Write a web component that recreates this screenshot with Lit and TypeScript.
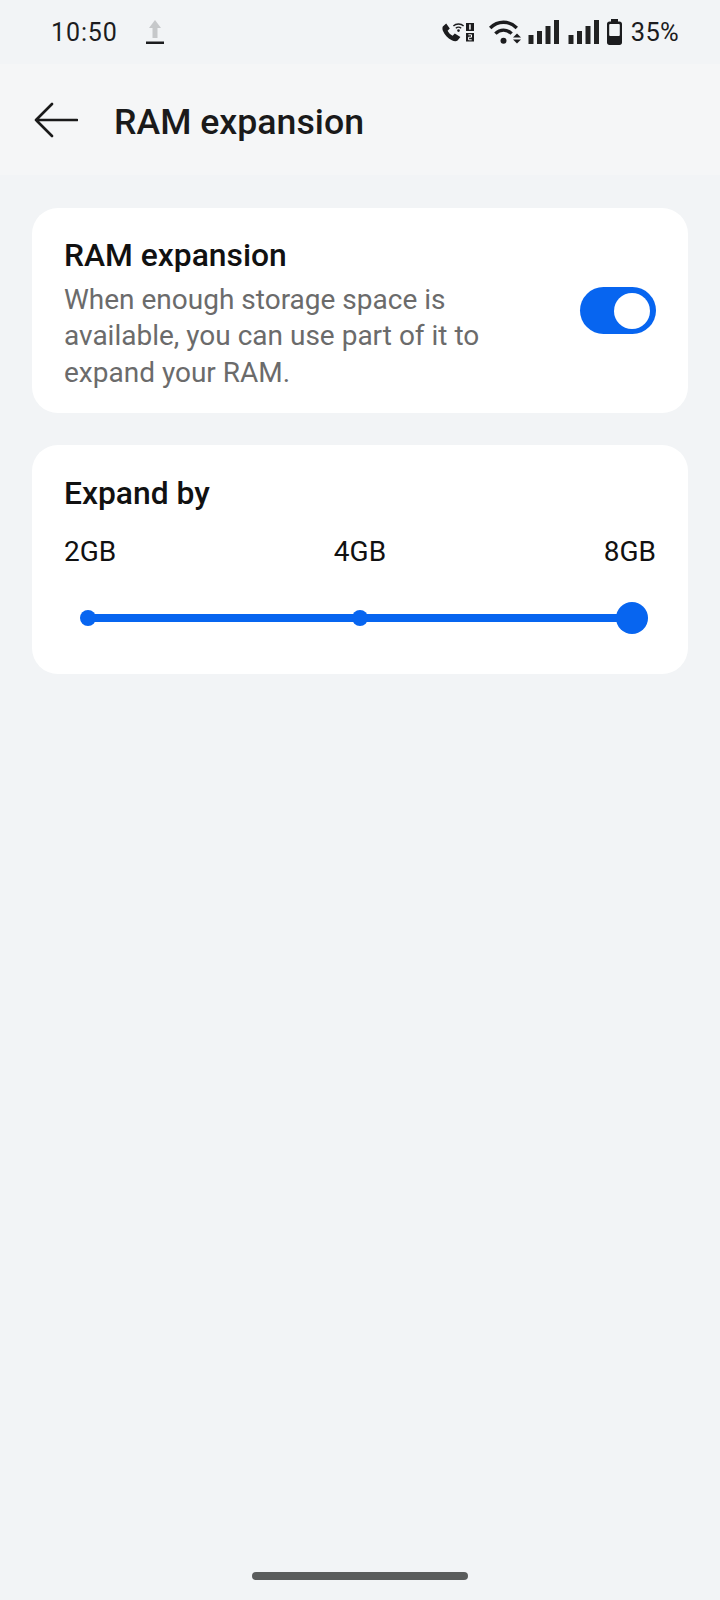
import { LitElement, html, css, svg } from "lit";
import { customElement, property } from "lit/decorators.js";

const signalBars = svg`
  <rect x="0.5" y="15" width="5" height="9" fill="#222"></rect>
  <rect x="9" y="11" width="5" height="13" fill="#222"></rect>
  <rect x="17.5" y="6" width="5" height="18" fill="#222"></rect>
  <rect x="26" y="0" width="5" height="24" fill="#222"></rect>
`;

@customElement("status-bar")
export class StatusBar extends LitElement {
  static styles = css`
    :host {
      display: flex;
      align-items: center;
      height: 64px;
      padding: 0 41px 0 51px;
      box-sizing: border-box;
      color: #1c1c1e;
      font-family: Roboto, sans-serif;
      font-size: 25px;
    }

    svg {
      display: block;
      flex: none;
    }

    .time {
      width: 95px;
      letter-spacing: 0.9px;
    }

    .spacer {
      flex: 1;
    }

    .call {
      margin-right: 15px;
    }

    .wifi {
      margin-right: 7px;
    }

    .signal {
      margin-right: 9px;
    }

    .battery {
      margin: 0 9px 0 -1px;
    }

    .percent {
      font-size: 25.5px;
      letter-spacing: 0.3px;
    }
  `;

  render() {
    return html`
      <span class="time">10:50</span>
      <svg width="18" height="24" viewBox="0 0 18 24">
        <path d="M9 0 L15 8 H11.5 V18 H6.5 V8 H3 Z" fill="#c6c8ca"></path>
        <rect x="0" y="21.5" width="18" height="2.5" fill="#1c1c1e"></rect>
      </svg>
      <span class="spacer"></span>
      <svg class="call" width="32" height="20" viewBox="0 0 32 20">
        <path
          d="M.8 4.4 L4.2 1.4 L7.8 6.6 L5.6 8.8 C6.8 11 8.4 12.6 10.6 13.8 L12.8 11.6 L18.4 15 L15.6 18.6 C14 19.6 12 19.4 9.8 18.2 C5.6 16 2.6 13 1 9 C.4 7.4 .2 5.8 .8 4.4 Z"
          fill="#1c1c1e"
        ></path>
        <path
          d="M11.4 4 C14 1.4 19 1.4 21.6 4 M13.8 6.2 C15.2 5 17.8 5 19.2 6.2"
          fill="none"
          stroke="#1c1c1e"
          stroke-width="1.4"
        ></path>
        <circle cx="16.5" cy="8.6" r="1.3" fill="#1c1c1e"></circle>
        <rect x="24" y="1" width="8" height="8" fill="#1c1c1e"></rect>
        <rect x="24" y="11" width="8" height="8.5" fill="#1c1c1e"></rect>
        <rect x="27.2" y="2.4" width="1.5" height="5.2" fill="#fff"></rect>
        <path
          d="M26.4 12.8 H29.5 V15.2 H26.6 V17.8 H29.7"
          fill="none"
          stroke="#fff"
          stroke-width="1"
        ></path>
      </svg>
      <svg class="wifi" width="32" height="24" viewBox="0 0 32 24">
        <path
          d="M1.2 8 C8.8 .4 20.2 .4 27.8 8 M6.4 13.6 C11 9 18 9 22.6 13.6"
          fill="none"
          stroke="#1c1c1e"
          stroke-width="3.4"
        ></path>
        <circle cx="14.5" cy="20.8" r="3" fill="#1c1c1e"></circle>
        <path d="M28 13.5 L32 17.5 H24 Z M24 19.5 H32 L28 23.5 Z" fill="#1c1c1e"></path>
      </svg>
      <svg class="signal" width="31" height="24" viewBox="0 0 31 24">${signalBars}</svg>
      <svg class="signal" width="31" height="24" viewBox="0 0 31 24">${signalBars}</svg>
      <svg class="battery" width="15" height="26" viewBox="0 0 15 26">
        <path
          d="M4 0 H11 V2.5 H12.5 C14 2.5 15 3.5 15 5 V23.5 C15 25 14 26 12.5 26 H2.5 C1 26 0 25 0 23.5 V5 C0 3.5 1 2.5 2.5 2.5 H4 Z"
          fill="#1c1c1e"
        ></path>
        <rect x="2.2" y="5" width="10.6" height="12" rx="1" fill="#f2f4f6"></rect>
      </svg>
      <span class="percent">35%</span>
    `;
  }
}

@customElement("page-header")
export class PageHeader extends LitElement {
  @property() heading = "";

  static styles = css`
    :host {
      display: flex;
      align-items: center;
      gap: 36px;
      height: 111px;
      padding-left: 34px;
      box-sizing: border-box;
      background: #f5f6f7;
    }

    svg {
      display: block;
      flex: none;
    }

    h1 {
      margin: 5px 0 0;
      color: #1a1a1a;
      font-family: Roboto, sans-serif;
      font-size: 35.7px;
      font-weight: 500;
    }
  `;

  render() {
    return html`
      <svg width="44" height="36" viewBox="0 0 44 36">
        <path
          d="M18 2 L2 18 L18 34 M2 18 H43"
          fill="none"
          stroke="#1a1a1a"
          stroke-width="2.6"
          stroke-linecap="round"
          stroke-linejoin="round"
        ></path>
      </svg>
      <h1>${this.heading}</h1>
    `;
  }
}

@customElement("toggle-switch")
export class ToggleSwitch extends LitElement {
  static styles = css`
    :host {
      display: flex;
      align-items: center;
      justify-content: flex-end;
      flex: none;
      width: 76px;
      height: 47px;
      padding-right: 6px;
      box-sizing: border-box;
      border-radius: 24px;
      background: #0765f0;
    }

    .thumb {
      width: 36px;
      height: 36px;
      border-radius: 50%;
      background: #fff;
    }
  `;

  render() {
    return html`<div class="thumb"></div>`;
  }
}

@customElement("stop-slider")
export class StopSlider extends LitElement {
  static styles = css`
    :host {
      display: flex;
      align-items: center;
      justify-content: space-between;
      position: relative;
      height: 32px;
      margin: 0 8px;
    }

    .track {
      position: absolute;
      left: 16px;
      right: 16px;
      top: 12px;
      height: 8px;
      background: #0765f0;
    }

    .stop {
      position: relative;
      display: flex;
      align-items: center;
      justify-content: center;
      width: 32px;
      height: 32px;
    }

    .dot {
      width: 16px;
      height: 16px;
      border-radius: 50%;
      background: #0765f0;
    }

    .active .dot {
      width: 32px;
      height: 32px;
    }
  `;

  render() {
    return html`
      <div class="track"></div>
      <div class="stop"><div class="dot"></div></div>
      <div class="stop"><div class="dot"></div></div>
      <div class="stop active"><div class="dot"></div></div>
    `;
  }
}

@customElement("app-root")
export class AppRoot extends LitElement {
  static styles = css`
    :host {
      display: flex;
      flex-direction: column;
      height: 1600px;
      background: #f2f4f6;
      font-family: Roboto, sans-serif;
      overflow: hidden;
    }

    main {
      flex: 1;
      display: flex;
      flex-direction: column;
      gap: 32px;
      padding: 33px 32px 0;
    }

    .card {
      background: #fff;
      border-radius: 26px;
      padding: 0 32px;
    }

    .ram {
      display: flex;
      align-items: center;
      justify-content: space-between;
      height: 205px;
    }

    .ram-text {
      padding-top: 7px;
    }

    h2 {
      margin: 0;
      color: #111;
      font-size: 31.8px;
      font-weight: 500;
      line-height: 36px;
    }

    p {
      width: 470px;
      margin: 9px 0 0;
      color: #6b6b6b;
      font-size: 28px;
      line-height: 36.5px;
    }

    .expand {
      height: 229px;
      padding-top: 30px;
      box-sizing: border-box;
    }

    .labels {
      display: flex;
      justify-content: space-between;
      margin: 24px 0 33px;
      color: #111;
      font-size: 28px;
      line-height: 34px;
    }

    .home {
      width: 216px;
      height: 8px;
      margin: 0 auto 20px;
      border-radius: 4px;
      background: #5a5c5c;
    }
  `;

  render() {
    return html`
      <status-bar></status-bar>
      <page-header heading="RAM expansion"></page-header>
      <main>
        <section class="card ram">
          <div class="ram-text">
            <h2>RAM expansion</h2>
            <p>When enough storage space is available, you can use part of it to expand your RAM.</p>
          </div>
          <toggle-switch></toggle-switch>
        </section>
        <section class="card expand">
          <h2>Expand by</h2>
          <div class="labels">
            <span>2GB</span>
            <span>4GB</span>
            <span>8GB</span>
          </div>
          <stop-slider></stop-slider>
        </section>
      </main>
      <div class="home"></div>
    `;
  }
}
